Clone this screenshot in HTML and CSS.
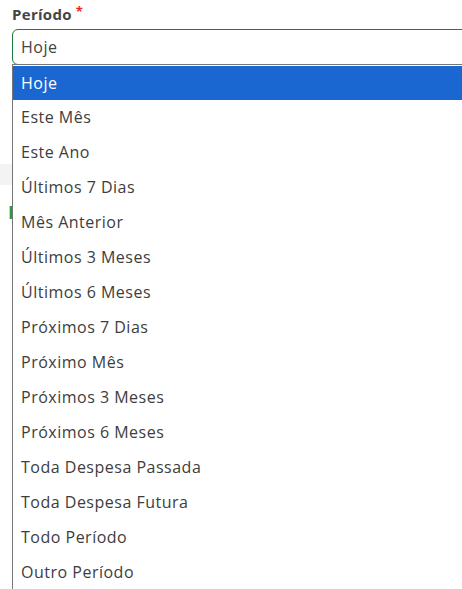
FILE: index.html
```html
<!DOCTYPE html>
<html lang="pt-BR">
<head>
<meta charset="utf-8">
<link rel="stylesheet" href="styles.css">
</head>
<body>
<div class="page">
  <div class="label"><span>Período</span><span class="req">*</span></div>
  <div class="field">
    <div class="select">Hoje</div>
    <ul class="dropdown">
      <li class="opt active">Hoje</li>
      <li class="opt">Este Mês</li>
      <li class="opt">Este Ano</li>
      <li class="opt">Últimos 7 Dias</li>
      <li class="opt">Mês Anterior</li>
      <li class="opt">Últimos 3 Meses</li>
      <li class="opt">Últimos 6 Meses</li>
      <li class="opt">Próximos 7 Dias</li>
      <li class="opt">Próximo Mês</li>
      <li class="opt">Próximos 3 Meses</li>
      <li class="opt">Próximos 6 Meses</li>
      <li class="opt">Toda Despesa Passada</li>
      <li class="opt">Toda Despesa Futura</li>
      <li class="opt">Todo Período</li>
      <li class="opt">Outro Período</li>
    </ul>
  </div>
  <div class="behind">
    <div class="band"></div>
    <div class="green">R</div>
  </div>
</div>
</body>
</html>
```
FILE: styles.css
```css
html, body {
  margin: 0;
  padding: 0;
  background: #fff;
  overflow: hidden;
}
.page {
  width: 462px;
  height: 589px;
  overflow: hidden;
  font-family: "Open Sans", "Noto Sans", sans-serif;
  color: #3d3d3d;
}
.label {
  display: flex;
  align-items: flex-start;
  gap: 4px;
  padding: 4px 0 0 12px;
  height: 29px;
  box-sizing: border-box;
  font-size: 15px;
  font-weight: 700;
  color: #454545;
  line-height: 20px;
  letter-spacing: 0.3px;
}
.req {
  color: #e8291c;
  font-size: 13px;
  line-height: 13px;
  margin-top: 1px;
}
.field {
  position: relative;
  margin-left: 12px;
  width: 480px;
}
.select {
  height: 36px;
  box-sizing: border-box;
  border: 1px solid #1e7b34;
  border-radius: 6px;
  padding-left: 8px;
  font-size: 16px;
  letter-spacing: 0.5px;
  line-height: 34px;
  color: #444;
}
.dropdown {
  position: absolute;
  top: 35px;
  left: 0;
  width: 470px;
  margin: 0;
  padding: 0;
  list-style: none;
  background: #fff;
  border: 1px solid #767676;
  border-right: none;
  z-index: 2;
}
.opt {
  height: 35px;
  line-height: 35px;
  padding-left: 8px;
  font-size: 16px;
  letter-spacing: 0.5px;
  color: #3d3d3d;
}
.opt.active {
  background: #1a67d2;
  color: #fff;
  height: 34px;
  line-height: 34px;
  margin-top: 1px;
}
.behind {
  padding-top: 99px;
}
.band {
  height: 21px;
  background: #f3f3f3;
}
.green {
  margin-top: 17px;
  padding-left: 8px;
  color: #1e9e3e;
  font-weight: 700;
  font-size: 18px;
  line-height: 20px;
}
```
